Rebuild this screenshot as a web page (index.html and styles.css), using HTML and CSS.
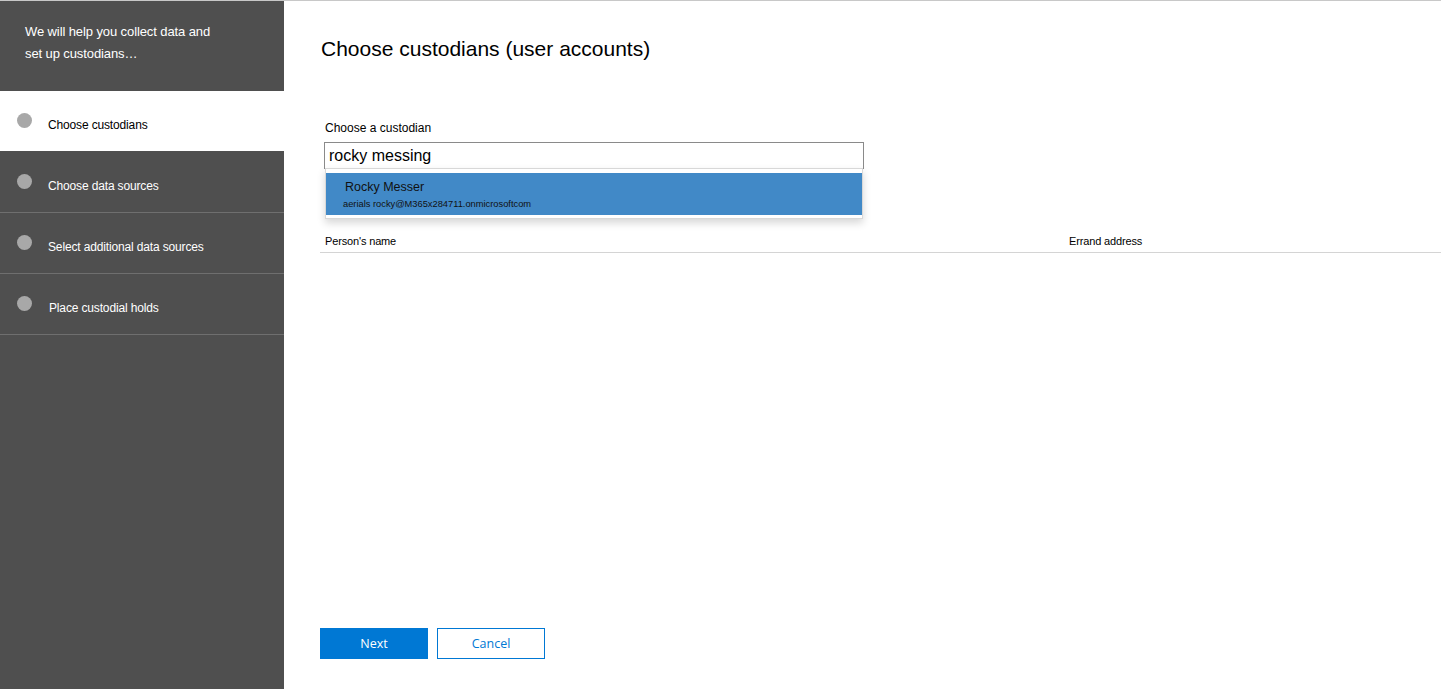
FILE: index.html
```html
<!DOCTYPE html>
<html lang="en">
<head>
<meta charset="utf-8">
<title>Choose custodians</title>
<link rel="stylesheet" href="styles.css">
</head>
<body>
<div class="app">
  <aside class="sidebar">
    <div class="sidebar-intro">We will help you collect data and<br>set up custodians…</div>
    <ul class="steps">
      <li class="step active"><span class="dot"></span><span class="step-label">Choose custodians</span></li>
      <li class="step"><span class="dot"></span><span class="step-label">Choose data sources</span></li>
      <li class="step"><span class="dot"></span><span class="step-label">Select additional data sources</span></li>
      <li class="step"><span class="dot"></span><span class="step-label shift">Place custodial holds</span></li>
    </ul>
  </aside>
  <main class="main">
    <h1 class="title">Choose custodians (user accounts)</h1>
    <label class="field-label">Choose a custodian</label>
    <div class="field">
      <div class="input">rocky messing</div>
      <div class="suggest">
        <div class="suggest-item">
          <div class="suggest-name">Rocky Messer</div>
          <div class="suggest-mail">aerials rocky@M365x284711.onmicrosoftcom</div>
        </div>
      </div>
    </div>
    <div class="table-head">
      <div class="col">Person's name</div>
      <div class="col">Errand address</div>
    </div>
    <div class="actions">
      <button class="btn primary">Next</button>
      <button class="btn secondary">Cancel</button>
    </div>
  </main>
</div>
</body>
</html>
```
FILE: styles.css
```css
* { box-sizing: border-box; }
html, body { margin: 0; padding: 0; }
body {
  border-top: 1px solid #c8c8c8;
  font-family: "Liberation Sans", Arial, sans-serif;
  color: #000;
  background: #fff;
}
.app {
  display: flex;
  height: 688px;
}
.sidebar {
  width: 284px;
  flex: none;
  background: #4f4f4f;
}
.sidebar-intro {
  height: 90px;
  padding: 20px 0 0 25px;
  color: #fff;
  font-size: 13px;
  line-height: 22px;
  letter-spacing: -0.1px;
}
.steps {
  list-style: none;
  margin: 0;
  padding: 0;
}
.step {
  display: flex;
  align-items: flex-start;
  height: 61px;
  padding: 22px 0 0 17px;
  border-bottom: 1px solid #6f6f6f;
  color: #fff;
}
.step.active {
  background: #fff;
  color: #000;
  border-bottom-color: #4f4f4f;
}
.dot {
  width: 15px;
  height: 15px;
  border-radius: 50%;
  background: #a8a8a8;
  flex: none;
}
.step-label {
  margin-left: 16px;
  padding-top: 5px;
  font-size: 12px;
  line-height: 15px;
  letter-spacing: -0.15px;
}
.step-label.shift { margin-left: 17px; }
.main {
  flex: 1;
  display: flex;
  flex-direction: column;
  padding: 36px 0 30px 36px;
}
.title {
  margin: 0 0 0 1px;
  font-size: 21px;
  line-height: 24px;
  font-weight: normal;
}
.field-label {
  display: block;
  margin: 60px 0 0 5px;
  font-size: 12px;
  line-height: 14px;
}
.field {
  position: relative;
  margin: 7px 0 0 4px;
  width: 540px;
}
.input {
  height: 27px;
  border: 1px solid #8a8a8a;
  padding: 0 0 0 4px;
  font-size: 16px;
  line-height: 25px;
}
.suggest {
  position: absolute;
  top: 26px;
  left: 1px;
  width: 538px;
  background: #fff;
  border: 1px solid #d8d8d8;
  padding: 4px 0 3px;
  box-shadow: 0 4px 8px rgba(0,0,0,0.16);
}
.suggest-item {
  background: #4189c7;
  height: 42px;
  padding-top: 7px;
}
.suggest-name {
  padding-left: 19px;
  font-size: 12.5px;
  line-height: 14px;
  color: #111;
}
.suggest-mail {
  margin-top: 5px;
  padding-left: 17px;
  font-size: 9.3px;
  line-height: 11px;
  color: #111;
}
.table-head {
  display: grid;
  grid-template-columns: 744px 1fr;
  margin-top: 65px;
  padding-bottom: 4px;
  border-bottom: 1px solid #d4d4d4;
}
.col {
  padding-left: 5px;
  font-size: 11px;
  line-height: 14px;
  letter-spacing: -0.15px;
}
.actions {
  margin-top: auto;
  display: flex;
  gap: 9px;
}
.btn {
  width: 108px;
  height: 31px;
  font-family: "Open Sans", "Liberation Sans", sans-serif;
  font-size: 12.5px;
  border: 1px solid #0078d4;
  padding: 0;
}
.primary { background: #0078d4; color: #fff; }
.secondary { background: #fff; color: #0078d4; }
```
